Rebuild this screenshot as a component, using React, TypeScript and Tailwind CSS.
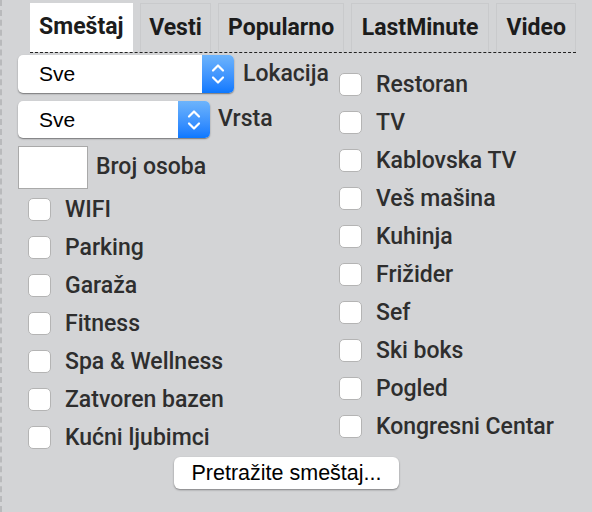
import React from "react";

const leftChecks = ["WIFI", "Parking", "Garaža", "Fitness", "Spa & Wellness", "Zatvoren bazen", "Kućni ljubimci"];
const rightChecks = ["Restoran", "TV", "Kablovska TV", "Veš mašina", "Kuhinja", "Frižider", "Sef", "Ski boks", "Pogled", "Kongresni Centar"];

const tabs = [
  { label: "Smeštaj", w: "w-[103px]", active: true },
  { label: "Vesti", w: "w-[72px]" },
  { label: "Popularno", w: "w-[126px]" },
  { label: "LastMinute", w: "w-[139px]" },
  { label: "Video", w: "w-[80px]" },
];

function Chevrons() {
  return (
    <svg width="16" height="26" viewBox="0 0 16 26" fill="none" stroke="white" strokeWidth="2.2" strokeLinecap="round" strokeLinejoin="round">
      <path d="M3 9.5 L8 4.5 L13 9.5" />
      <path d="M3 16.5 L8 21.5 L13 16.5" />
    </svg>
  );
}

function FakeSelect({ w, h }: { w: string; h: string }) {
  return (
    <div className={`flex ${w} ${h} rounded-[5px] bg-white shadow-[0_1px_1.5px_rgba(0,0,0,0.45)] overflow-hidden shrink-0`}>
      <div className="flex-1 flex items-center pl-[21px] text-[21px] text-black font-['Liberation_Sans',Arial,sans-serif]">
        Sve
      </div>
      <div className="w-[32px] flex items-center justify-center bg-gradient-to-b from-[#6db4fb] to-[#0a78ff]">
        <Chevrons />
      </div>
    </div>
  );
}

function Check({ label, indent }: { label: string; indent?: boolean }) {
  return (
    <label className={`flex items-center h-[38px] ${indent ? "pl-[10px]" : ""}`}>
      <span className="w-[23px] h-[23px] rounded-[5px] bg-white border border-[#b4b4b4] shrink-0" />
      <span className="ml-[14px] text-[23px] font-medium text-[#2e2e2e] leading-none">{label}</span>
    </label>
  );
}

export default function App() {
  return (
    <div className="w-[592px] h-[512px] bg-[#d3d4d6] border-l-2 border-dashed border-[#b9babc] font-['Roboto',sans-serif] overflow-hidden">
      {/* tabs */}
      <div className="flex gap-[7px] ml-[28px] pt-[3px] w-[546px] border-b border-dashed border-[#222]">
        {tabs.map((t) => (
          <div
            key={t.label}
            className={`${t.w} h-[49px] flex items-center justify-center text-[23px] font-bold text-[#1c1c1c] ${
              t.active ? "bg-white" : "border border-b-0 border-[#c9cacc]"
            }`}
          >
            {t.label}
          </div>
        ))}
      </div>

      <div className="flex">
        {/* left column */}
        <div className="w-[321px] pl-[16px] pt-[2px]">
          <div className="flex items-center gap-[9px]">
            <FakeSelect w="w-[216px]" h="h-[38px]" />
            <span className="text-[23px] font-medium text-[#2e2e2e]">Lokacija</span>
          </div>
          <div className="flex items-center gap-[8px] mt-[8px]">
            <FakeSelect w="w-[192px]" h="h-[37px]" />
            <span className="text-[23px] font-medium text-[#2e2e2e]">Vrsta</span>
          </div>
          <div className="flex items-center gap-[8px] mt-[8px]">
            <div className="w-[70px] h-[43px] bg-white border border-[#a9a9a9]" />
            <span className="text-[23px] font-medium text-[#2e2e2e]">Broj osoba</span>
          </div>
          <div className="mt-[1px]">
            {leftChecks.map((c) => (
              <Check key={c} label={c} indent />
            ))}
          </div>
        </div>

        {/* right column */}
        <div className="pt-[12px] pl-[16px]">
          {rightChecks.map((c) => (
            <Check key={c} label={c} />
          ))}
        </div>
      </div>

      <div className="pl-[172px] mt-[1px]">
        <button className="w-[225px] h-[32px] rounded-[6px] bg-white shadow-[0_1px_2px_rgba(0,0,0,0.4)] text-[21.5px] text-black font-['Liberation_Sans',Arial,sans-serif]">
          Pretražite smeštaj...
        </button>
      </div>
    </div>
  );
}
